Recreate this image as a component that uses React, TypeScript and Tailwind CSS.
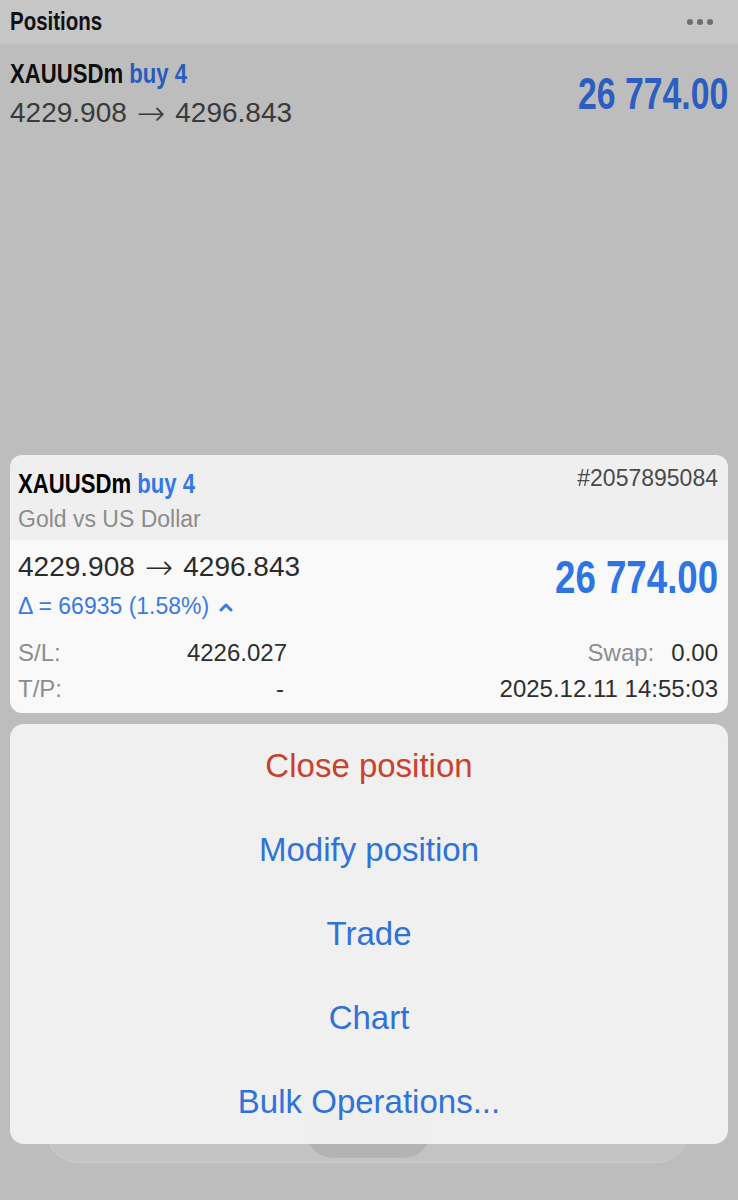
import React from "react";

const bold = "font-['Liberation_Sans',Arial,sans-serif] font-bold inline-block";

const actions = [
  { label: "Close position", color: "text-[#c9412f]" },
  { label: "Modify position", color: "text-[#2f72d9]" },
  { label: "Trade", color: "text-[#2f72d9]" },
  { label: "Chart", color: "text-[#2f72d9]" },
  { label: "Bulk Operations...", color: "text-[#2f72d9]" },
];

const ChevronUp = () => (
  <svg width="14" height="10" viewBox="0 0 14 10" className="ml-[10px] mt-[2px]">
    <polyline points="2,8 7,3 12,8" fill="none" stroke="#3b7be0" strokeWidth="3" strokeLinecap="round" strokeLinejoin="round" />
  </svg>
);

const Arrow = () => (
  <span className="font-['DejaVu_Sans',sans-serif] font-extralight text-[34px] leading-none mx-[10px]">→</span>
);

export default function App() {
  return (
    <div className="relative w-[738px] h-[1200px] overflow-hidden bg-[#bdbdbd] font-['Liberation_Sans',Arial,sans-serif]">
      {/* tab bar behind the sheet */}
      <div className="absolute left-[45px] top-[1040px] w-[645px] h-[123px] rounded-[34px] bg-[#c3c3c3] border border-[#cbcbcb]">
        <div className="absolute left-[260px] top-[62px] w-[125px] h-[55px] rounded-[28px] bg-[#b3b3b3]" />
      </div>

      <div className="relative flex flex-col">
        <div className="h-[44px] bg-[#c6c6c6] flex items-center justify-between pl-[10px] pr-[25px]">
          <span className={`${bold} origin-left scale-x-[0.82] text-[25px] text-[#111]`}>Positions</span>
          <div className="flex gap-[4px]">
            <span className="w-[6px] h-[6px] rounded-full bg-[#6e6e6e]" />
            <span className="w-[6px] h-[6px] rounded-full bg-[#6e6e6e]" />
            <span className="w-[6px] h-[6px] rounded-full bg-[#6e6e6e]" />
          </div>
        </div>

        <div className="flex items-center justify-between px-[10px] pt-[14px]">
          <div className="flex flex-col">
            <div className={`${bold} origin-left scale-x-[0.79] text-[28px] leading-[32px] text-[#0d0d0d]`}>
              XAUUSDm <span className="text-[#2a5cbc]">buy 4</span>
            </div>
            <div className="mt-[6px] flex items-center text-[28px] leading-[34px] text-[#3a3a3a]">
              4229.908<Arrow />4296.843
            </div>
          </div>
          <div className={`${bold} origin-right scale-x-[0.75] text-[45px] leading-[46px] text-[#2b5ebf]`}>26 774.00</div>
        </div>

        <div className="mx-[10px] mt-[325px] rounded-[12px] overflow-hidden">
          <div className="bg-[#efefef] pl-[8px] pr-[10px] pt-[12px] pb-[7px]">
            <div className="flex items-start justify-between">
              <div className={`${bold} origin-left scale-x-[0.79] text-[28px] leading-[34px] text-black`}>
                XAUUSDm <span className="text-[#3478e4]">buy 4</span>
              </div>
              <div className="text-[23px] leading-[22px] text-[#4a4a4a]">#2057895084</div>
            </div>
            <div className="mt-[4px] text-[23px] leading-[28px] text-[#8c8c8c]">Gold vs US Dollar</div>
          </div>
          <div className="bg-[#f9f9f9] pl-[8px] pr-[10px] pt-[10px] pb-[9px]">
            <div className="flex items-start justify-between">
              <div className="flex flex-col">
                <div className="flex items-center text-[28px] leading-[34px] text-[#2b2b2b]">
                  4229.908<Arrow />4296.843
                </div>
                <div className="mt-[8px] flex items-center text-[23px] leading-[28px] text-[#3b7be0]">
                  Δ = 66935 (1.58%)
                  <ChevronUp />
                </div>
              </div>
              <div className={`${bold} origin-right scale-x-[0.78] mt-[3px] text-[47px] leading-[48px] text-[#2f74e3]`}>26 774.00</div>
            </div>
            <div className="mt-[18px] flex items-center justify-between text-[24px] leading-[30px]">
              <div className="w-[269px] flex justify-between">
                <span className="text-[#8d8d8d]">S/L:</span>
                <span className="text-[#2e2e2e]">4226.027</span>
              </div>
              <div className="flex gap-[17px]">
                <span className="text-[#8d8d8d]">Swap:</span>
                <span className="text-[#2e2e2e]">0.00</span>
              </div>
            </div>
            <div className="mt-[6px] flex items-center justify-between text-[24px] leading-[30px]">
              <div className="w-[269px] flex justify-between">
                <span className="text-[#8d8d8d]">T/P:</span>
                <span className="text-[#2e2e2e] pr-[3px]">-</span>
              </div>
              <span className="text-[#2e2e2e]">2025.12.11 14:55:03</span>
            </div>
          </div>
        </div>

        <div className="mx-[10px] mt-[11px] rounded-[14px] bg-[#f2f2f2]/95 flex flex-col">
          {actions.map((a) => (
            <div key={a.label} className={`h-[84px] flex items-center justify-center text-[33px] ${a.color}`}>
              {a.label}
            </div>
          ))}
        </div>
      </div>
    </div>
  );
}
